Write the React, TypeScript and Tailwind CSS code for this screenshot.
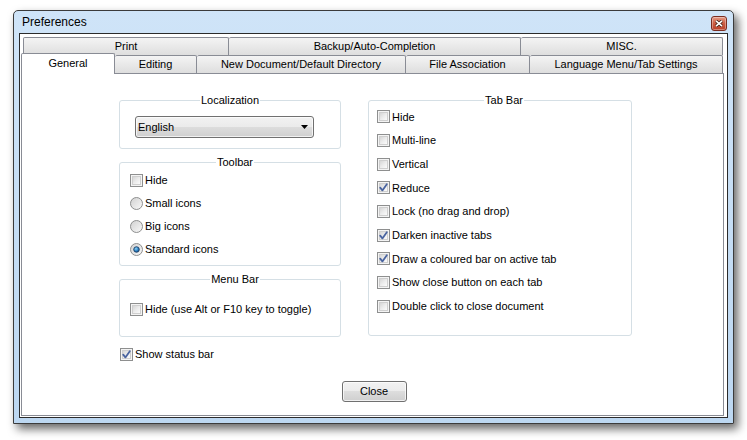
// Preferences dialog (Windows 7 basic look)

const FONT = { fontFamily: '"Liberation Sans", Arial, sans-serif' };

const TOOLBAR_ITEMS = [
  { label: 'Small icons', checked: false },
  { label: 'Big icons', checked: false },
  { label: 'Standard icons', checked: true },
];

const TABBAR_ITEMS = [
  { label: 'Hide', checked: false },
  { label: 'Multi-line', checked: false },
  { label: 'Vertical', checked: false },
  { label: 'Reduce', checked: true },
  { label: 'Lock (no drag and drop)', checked: false },
  { label: 'Darken inactive tabs', checked: true },
  { label: 'Draw a coloured bar on active tab', checked: true },
  { label: 'Show close button on each tab', checked: false },
  { label: 'Double click to close document', checked: false },
];

const BACK_TABS = [
  { label: 'Print', w: 'w-[206px]' },
  { label: 'Backup/Auto-Completion', w: 'w-[292px]' },
  { label: 'MISC.', w: 'w-[202px]' },
];

const FRONT_TABS = [
  { label: 'Editing', w: 'w-[82px]' },
  { label: 'New Document/Default Directory', w: 'w-[209px]' },
  { label: 'File Association', w: 'w-[124px]' },
  { label: 'Language Menu/Tab Settings', w: 'w-[193px]' },
];

function CheckBox({ checked }: { checked?: boolean }) {
  return (
    <span className="relative flex-none w-[13px] h-[13px] border border-[#8e8f8f] bg-[#f4f4f4] p-px">
      <span className="block w-full h-full border border-[#cfcfcf] bg-gradient-to-br from-[#d6d6d6] via-[#ececec] to-[#fbfbfb]" />
      {checked && (
        <svg className="absolute -left-px -top-px" width="13" height="13" viewBox="0 0 13 13">
          <path d="M3.2 6.6 L5.4 9.4 L9.8 3.2" fill="none" stroke="#4a64a0" strokeWidth="1.8" strokeLinecap="round" strokeLinejoin="round" />
        </svg>
      )}
    </span>
  );
}

function Radio({ checked }: { checked?: boolean }) {
  return (
    <svg className="flex-none" width="13" height="13" viewBox="0 0 13 13">
      <defs>
        <linearGradient id="rg" x1="0" y1="0" x2="1" y2="1">
          <stop offset="0" stopColor="#d0d0d0" />
          <stop offset="1" stopColor="#fafafa" />
        </linearGradient>
        <radialGradient id="rd" cx="0.4" cy="0.35" r="0.7">
          <stop offset="0" stopColor="#8fd3f7" />
          <stop offset="0.6" stopColor="#2a7fc0" />
          <stop offset="1" stopColor="#1b4a7e" />
        </radialGradient>
      </defs>
      <circle cx="6.5" cy="6.5" r="6" fill="url(#rg)" stroke="#8e8f8f" strokeWidth="1" />
      {checked && <circle cx="6.5" cy="6.5" r="2.8" fill="url(#rd)" stroke="#17375e" strokeWidth="0.8" />}
    </svg>
  );
}

function Row({ children, label }: { children: React.ReactNode; label: string }) {
  return (
    <div className="flex items-center gap-[2px] h-[23px] text-[11px] text-black">
      {children}
      <span>{label}</span>
    </div>
  );
}

function Group({ title, className, children }: { title: string; className: string; children?: React.ReactNode }) {
  return (
    <fieldset className={`border border-[#d5dfe5] rounded-[3px] ${className}`}>
      <legend className="mx-auto px-px text-[11px] leading-[13px] text-black">{title}</legend>
      {children}
    </fieldset>
  );
}

export default function App() {
  return (
    <div className="w-[747px] h-[440px] bg-white relative overflow-hidden" style={FONT}>
      {/* Window */}
      <div className="ml-[13px] mt-[10px] w-[721px] h-[414px] border border-[#3b3b3b] rounded-t-[5px] bg-gradient-to-b from-[#cfe4f8] to-[#bcd7f1] shadow-[4px_5px_10px_rgba(0,0,0,0.6)] flex flex-col px-[5px] pb-[5px]">
        {/* Title bar */}
        <div className="h-[22px] flex items-center justify-between pl-[3px] pr-px">
          <span className="text-[12px] text-black">Preferences</span>
          <div className="mt-[3px] w-[16px] h-[15px] rounded-[3px] border border-[#7a2c20] bg-gradient-to-b from-[#e39b86] via-[#cd5b41] to-[#b8402a] flex items-center justify-center shadow-[inset_0_0_0_1px_rgba(255,255,255,0.35)]">
            <svg width="8" height="7" viewBox="0 0 8 7">
              <path d="M1 0.8 L7 6.2 M7 0.8 L1 6.2" stroke="#3a1a12" strokeWidth="3" />
              <path d="M1 0.8 L7 6.2 M7 0.8 L1 6.2" stroke="#ffffff" strokeWidth="1.6" />
            </svg>
          </div>
        </div>

        {/* Client area */}
        <div className="flex-1 border border-[#2b2b2b] bg-white pl-px pt-[3px]">
          <div className="w-[703px] flex flex-col">
            {/* Back tab row */}
            <div className="flex h-[18px] ml-[2px]">
              {BACK_TABS.map((t, i) => (
                <div
                  key={t.label}
                  className={`${t.w} ${i === 0 ? 'border-l' : ''} border-t border-r border-[#898c95] rounded-t-[2px] bg-gradient-to-b from-[#f4f4f4] to-[#dedede] flex items-center justify-center text-[11px] text-black`}
                >
                  {t.label}
                </div>
              ))}
            </div>

            {/* Front tab row */}
            <div className="flex items-end h-[18px]">
              <div className="relative z-10 w-[94px] h-[21px] -mb-px border-t border-l border-r border-[#898c95] rounded-t-[2px] bg-white flex items-center justify-center text-[11px] text-black pb-[2px]">
                General
              </div>
              {FRONT_TABS.map((t) => (
                <div
                  key={t.label}
                  className={`${t.w} h-[18px] border-t border-r border-[#898c95] rounded-t-[2px] bg-gradient-to-b from-[#f4f4f4] to-[#dedede] flex items-center justify-center text-[11px] text-black`}
                >
                  {t.label}
                </div>
              ))}
            </div>

            {/* Tab page */}
            <div className="h-[343px] border border-[#898c95] bg-white flex flex-col">
              <div className="flex gap-[27px] pl-[97px] pt-[20px]">
                {/* Left column */}
                <div className="w-[222px] flex flex-col">
                  <Group title="Localization" className="h-[55px]">
                    <div className="ml-[15px] mt-[9px] w-[179px] h-[22px] rounded-[3px] border border-[#707070] bg-[linear-gradient(to_bottom,#f2f2f2_0%,#ebebeb_50%,#dddddd_50%,#cfcfcf_100%)] shadow-[inset_0_0_0_1px_rgba(255,255,255,0.7)] flex items-center justify-between pl-[2px] pr-[5px] text-[11px] text-black">
                      <span>English</span>
                      <svg width="7" height="4" viewBox="0 0 7 4">
                        <path d="M0 0 L7 0 L3.5 4 Z" fill="#000" />
                      </svg>
                    </div>
                  </Group>

                  <Group title="Toolbar" className="h-[110px] mt-[7px] pl-[10px]">
                    <Row label="Hide">
                      <CheckBox />
                    </Row>
                    {TOOLBAR_ITEMS.map((it) => (
                      <Row key={it.label} label={it.label}>
                        <Radio checked={it.checked} />
                      </Row>
                    ))}
                  </Group>

                  <Group title="Menu Bar" className="h-[64px] mt-[7px] pl-[10px]">
                    <div className="pt-[12px]">
                      <Row label="Hide (use Alt or F10 key to toggle)">
                        <CheckBox />
                      </Row>
                    </div>
                  </Group>

                  <div className="mt-[6px] ml-px">
                    <Row label="Show status bar">
                      <CheckBox checked />
                    </Row>
                  </div>
                </div>

                {/* Right column */}
                <Group title="Tab Bar" className="w-[264px] h-[242px] pl-[8px]">
                  <div className="-mt-[2px] flex flex-col">
                    {TABBAR_ITEMS.map((it) => (
                      <div key={it.label} className="h-[23.7px] flex items-center gap-[2px] text-[11px] text-black">
                        <CheckBox checked={it.checked} />
                        <span>{it.label}</span>
                      </div>
                    ))}
                  </div>
                </Group>
              </div>

              {/* Close button */}
              <div className="flex justify-center mt-[15px] pl-[3px]">
                <button className="w-[65px] h-[21px] rounded-[3px] border border-[#707070] bg-[linear-gradient(to_bottom,#f2f2f2_0%,#ebebeb_50%,#dddddd_50%,#cfcfcf_100%)] shadow-[inset_0_0_0_1px_rgba(255,255,255,0.7)] text-[11px] text-black">
                  Close
                </button>
              </div>
            </div>
          </div>
        </div>
      </div>
    </div>
  );
}
